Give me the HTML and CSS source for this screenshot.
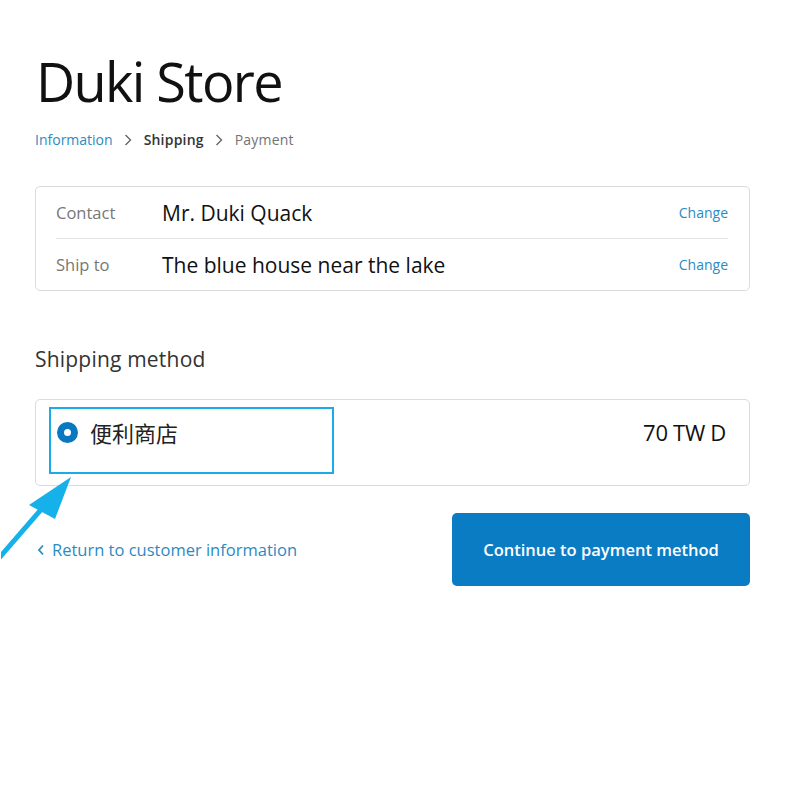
FILE: index.html
```html
<!DOCTYPE html>
<html lang="en">
<head>
    <meta charset="UTF-8">
    <meta name="viewport" content="width=device-width, initial-scale=1.0">
    <title>Duki Store - Shipping</title>
    <link rel="stylesheet" href="styles.css">
</head>
<body>
<main class="checkout">
    <h1 class="store-name">Duki Store</h1>

    <nav class="breadcrumb">
        <a href="#" class="crumb crumb-link">Information</a>
        <svg class="crumb-sep" width="8" height="12" viewBox="0 0 8 12"><path d="M1.5 1 L6.5 6 L1.5 11" fill="none" stroke="#666" stroke-width="1.4"/></svg>
        <span class="crumb crumb-current">Shipping</span>
        <svg class="crumb-sep" width="8" height="12" viewBox="0 0 8 12"><path d="M1.5 1 L6.5 6 L1.5 11" fill="none" stroke="#666" stroke-width="1.4"/></svg>
        <span class="crumb crumb-next">Payment</span>
    </nav>

    <section class="review">
        <div class="review-row">
            <span class="review-label">Contact</span>
            <span class="review-value">Mr. Duki Quack</span>
            <a href="#" class="review-change">Change</a>
        </div>
        <div class="review-row">
            <span class="review-label">Ship to</span>
            <span class="review-value">The blue house near the lake</span>
            <a href="#" class="review-change">Change</a>
        </div>
    </section>

    <h2 class="section-title">Shipping method</h2>

    <section class="methods">
        <label class="method">
            <span class="radio"><span class="radio-dot"></span></span>
            <span class="method-name">便利商店</span>
            <span class="method-price">70 TW D</span>
        </label>
        <div class="highlight"></div>
        <svg class="pointer" width="80" height="92" viewBox="0 0 80 92">
            <line x1="-2" y1="90" x2="44" y2="37" stroke="#16b0ea" stroke-width="5"/>
            <polygon points="70,9 28,37 54,51" fill="#16b0ea"/>
        </svg>
    </section>

    <div class="actions">
        <a href="#" class="back-link">
            <svg class="back-icon" width="8" height="12" viewBox="0 0 8 12"><path d="M6 1.5 L2 6 L6 10.5" fill="none" stroke="#2a8bc4" stroke-width="1.8"/></svg>
            Return to customer information
        </a>
        <button type="button" class="continue-btn">Continue to payment method</button>
    </div>
</main>
</body>
</html>
```

FILE: styles.css
```css
body {
    margin: 0;
    background-color: #fff;
    color: #333;
    font-family: "Open Sans", "Noto Sans CJK TC", sans-serif;
}
a {
    text-decoration: none;
}
.checkout {
    width: 715px;
    padding: 45px 0 0 35px;
}
.store-name {
    margin: 0 0 0 1px;
    font-size: 54px;
    font-weight: 400;
    line-height: 72px;
    color: #111;
    letter-spacing: -1.6px;
}
.breadcrumb {
    display: flex;
    align-items: center;
    margin-top: 13px;
    font-size: 14px;
    line-height: 20px;
}
.crumb-link {
    color: #2a8bc4;
}
.crumb-current {
    font-weight: 600;
    color: #333;
    letter-spacing: 0.2px;
}
.crumb-next {
    color: #737373;
    letter-spacing: 0.2px;
}
.crumb-sep {
    margin: 0 12px 0 11px;
}
.review {
    margin-top: 36px;
    border: 1px solid #dcdcdc;
    border-radius: 5px;
    padding: 0 21px 0 20px;
}
.review-row {
    display: flex;
    align-items: center;
    height: 51px;
}
.review-row + .review-row {
    border-top: 1px solid #e3e3e3;
}
.review-label {
    width: 106px;
    font-size: 16.5px;
    color: #777;
}
.review-value {
    flex: 1;
    font-size: 21px;
    color: #111;
}
.review-change {
    font-size: 14px;
    color: #2a8bc4;
}
.section-title {
    margin: 53px 0 0;
    font-size: 21px;
    font-weight: 400;
    line-height: 30px;
    color: #333;
    letter-spacing: 0.2px;
}
.methods {
    position: relative;
    margin-top: 25px;
    border: 1px solid #dcdcdc;
    border-radius: 5px;
    height: 85px;
}
.method {
    display: flex;
    align-items: center;
    padding: 16px 23px 0 21px;
}
.radio {
    display: flex;
    align-items: center;
    justify-content: center;
    width: 21px;
    height: 21px;
    border-radius: 50%;
    background-color: #0a78c0;
}
.radio-dot {
    width: 7px;
    height: 7px;
    border-radius: 50%;
    background-color: #fff;
}
.method-name {
    flex: 1;
    margin-left: 12px;
    font-size: 22px;
    color: #222;
}
.method-price {
    font-size: 22px;
    color: #111;
    letter-spacing: -0.3px;
}
.highlight {
    position: absolute;
    left: 13px;
    top: 7px;
    width: 281px;
    height: 63px;
    border: 2px solid #19ace6;
}
.pointer {
    position: absolute;
    left: -35px;
    top: 68px;
}
.actions {
    display: flex;
    align-items: center;
    justify-content: space-between;
    margin-top: 27px;
}
.back-link {
    display: flex;
    align-items: center;
    margin-left: 2px;
    font-size: 16.5px;
    color: #2a8bc4;
}
.back-icon {
    margin-right: 7px;
}
.continue-btn {
    width: 298px;
    height: 73px;
    border: none;
    border-radius: 5px;
    background-color: #0a7cc4;
    color: #fff;
    font-family: "Open Sans", sans-serif;
    font-size: 16.5px;
    font-weight: 600;
    cursor: pointer;
}
```
